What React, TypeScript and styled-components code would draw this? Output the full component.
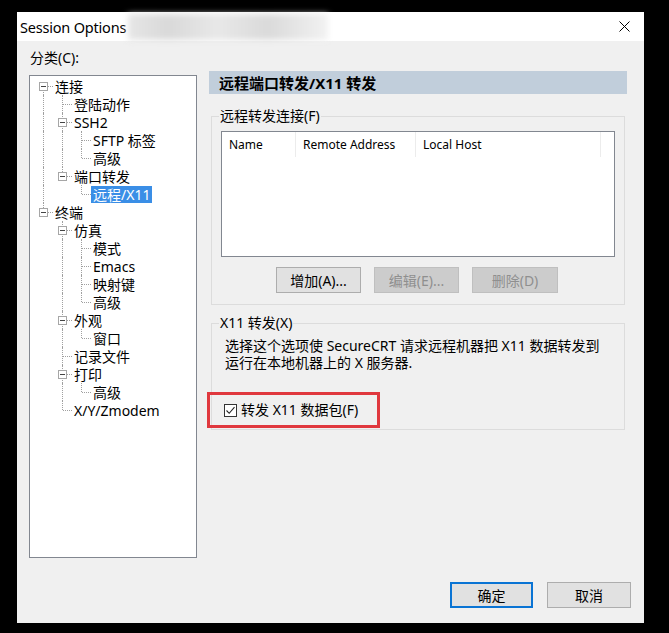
import React from "react";
import styled, { createGlobalStyle } from "styled-components";

const GlobalStyle = createGlobalStyle`
	html, body {
		margin: 0;
		padding: 0;
		background: #000;
	}
	body {
		font-family: "Noto Sans", "Noto Sans CJK SC", sans-serif;
		font-size: 14px;
		color: #000;
	}
`;

type TreeNode = { label: string; children?: TreeNode[]; selected?: boolean };

const tree: TreeNode[] = [
	{
		label: "连接",
		children: [
			{ label: "登陆动作" },
			{ label: "SSH2", children: [{ label: "SFTP 标签" }, { label: "高级" }] },
			{ label: "端口转发", children: [{ label: "远程/X11", selected: true }] },
		],
	},
	{
		label: "终端",
		children: [
			{
				label: "仿真",
				children: [
					{ label: "模式" },
					{ label: "Emacs" },
					{ label: "映射键" },
					{ label: "高级" },
				],
			},
			{ label: "外观", children: [{ label: "窗口" }] },
			{ label: "记录文件" },
			{ label: "打印", children: [{ label: "高级" }] },
			{ label: "X/Y/Zmodem" },
		],
	},
];

type FlatRow = {
	node: TreeNode;
	level: number;
	guides: boolean[];
	hasNext: boolean;
	isFirstRoot: boolean;
};

const flatten = (nodes: TreeNode[], level = 0, guides: boolean[] = []): FlatRow[] =>
	nodes.flatMap((node, i) => {
		const hasNext = i < nodes.length - 1;
		const row: FlatRow = {
			node,
			level,
			guides,
			hasNext,
			isFirstRoot: level === 0 && i === 0,
		};
		return [row, ...(node.children ? flatten(node.children, level + 1, [...guides, hasNext]) : [])];
	});

const Shell = styled.div`
	padding: 12px 0 0 17px;
`;

const Window = styled.div`
	width: 627px;
	height: 611px;
	background: #f0f0f0;
	display: flex;
	flex-direction: column;
	box-sizing: border-box;
`;

const TitleBar = styled.div`
	height: 29px;
	background: #fff;
	display: flex;
	align-items: center;
	padding-left: 3px;
	flex: none;
`;

const TitleText = styled.span`
	font-family: "Noto Sans", sans-serif;
	font-size: 14.5px;
	letter-spacing: -0.2px;
	color: #000;
`;

const Smudge = styled.span`
	width: 200px;
	height: 26px;
	margin-left: 2px;
	background: linear-gradient(90deg, #e6e6e6 0%, #d9d9d9 20%, #e8e8e8 45%, #dadada 70%, #f2f2f2 100%);
	filter: blur(3px);
`;

const CloseButton = styled.span`
	margin-left: auto;
	width: 46px;
	height: 29px;
	display: flex;
	align-items: center;
	justify-content: center;
	margin-right: -3px;
`;

const Body = styled.div`
	flex: 1;
	display: flex;
	flex-direction: column;
	padding: 0 13px 16px 12px;
`;

const Main = styled.div`
	display: flex;
	gap: 12px;
	height: 517px;
	margin-right: 4px;
`;

const LeftCol = styled.div`
	width: 168px;
	display: flex;
	flex-direction: column;
	padding-top: 8px;
`;

const CategoryLabel = styled.div`
	font-size: 14px;
	line-height: 18px;
	height: 18px;
	margin-bottom: 8px;
	padding-left: 1px;
`;

const TreeBox = styled.div`
	height: 483px;
	box-sizing: border-box;
	background: #fff;
	border: 1px solid #828790;
	padding: 1px 0 0 4px;
`;

const TreeRow = styled.div`
	display: flex;
	align-items: center;
	height: 18px;
`;

const Cell = styled.span<{ $up?: boolean; $down?: boolean; $across?: boolean }>`
	position: relative;
	flex: none;
	width: 19px;
	height: 18px;

	&::before {
		content: "";
		display: ${(p) => (p.$up || p.$down ? "block" : "none")};
		position: absolute;
		left: 9px;
		top: ${(p) => (p.$up ? 0 : 9)}px;
		bottom: ${(p) => (p.$down ? 0 : 9)}px;
		border-left: 1px dotted #a0a0a0;
	}

	&::after {
		content: "";
		display: ${(p) => (p.$across ? "block" : "none")};
		position: absolute;
		left: 10px;
		right: 0;
		top: 9px;
		border-top: 1px dotted #a0a0a0;
	}
`;

const Expander = styled.span`
	position: absolute;
	z-index: 1;
	left: 5px;
	top: 5px;
	width: 9px;
	height: 9px;
	box-sizing: border-box;
	border: 1px solid #a6a6a6;
	background: #fff;

	&::after {
		content: "";
		position: absolute;
		left: 1px;
		right: 1px;
		top: 3px;
		border-top: 1px solid #444;
	}
`;

const TreeLabel = styled.span<{ $selected?: boolean }>`
	padding: 0 2px;
	line-height: 17px;
	font-size: 14px;
	white-space: nowrap;
	background: ${(p) => (p.$selected ? "#3a8ee6" : "transparent")};
	color: ${(p) => (p.$selected ? "#fff" : "#000")};
`;

const RightCol = styled.div`
	flex: 1;
	display: flex;
	flex-direction: column;
	padding-top: 30px;
`;

const PageHeader = styled.div`
	height: 23px;
	background: #c1cedb;
	display: flex;
	align-items: center;
	padding-left: 10px;
	font-size: 15px;
	font-weight: 700;
	flex: none;
`;

const Group = styled.fieldset<{ $top: number; $bottom: number; $padTop?: number }>`
	margin: ${(p) => p.$top}px 2px 0;
	border: 1px solid #dcdcdc;
	padding: ${(p) => p.$padTop ?? 7}px 9px ${(p) => p.$bottom}px;
	min-width: 0;
`;

const GroupLegend = styled.legend`
	font-size: 14px;
	line-height: 16px;
	padding: 0 1px;
	margin-left: -2px;
`;

const ListView = styled.div`
	height: 126px;
	box-sizing: border-box;
	border: 1px solid #828790;
	background: #fff;
`;

const ListHeader = styled.div`
	display: flex;
	height: 25px;
	align-items: center;
	font-family: "Noto Sans", sans-serif;
	font-size: 12px;
`;

const Column = styled.div<{ $w: number }>`
	width: ${(p) => p.$w}px;
	height: 25px;
	line-height: 25px;
	padding-left: 7px;
	box-sizing: border-box;
	border-right: 1px solid #ececec;
	color: #000;
	white-space: nowrap;
`;

const ButtonRow = styled.div`
	display: flex;
	justify-content: center;
	gap: 13px;
	margin-top: 10px;
	padding-right: 2px;
`;

const Button = styled.button<{ $width?: number; $primary?: boolean }>`
	width: ${(p) => p.$width ?? 85}px;
	height: 26px;
	box-sizing: border-box;
	font-family: "Noto Sans", "Noto Sans CJK SC", sans-serif;
	font-size: 14px;
	color: #000;
	background: #e1e1e1;
	border: ${(p) => (p.$primary ? "2px solid #0a74d4" : "1px solid #adadad")};
	padding: 0;
	border-radius: 0;

	&:disabled {
		background: #cccccc;
		border-color: #bfbfbf;
		color: #8f8f8f;
	}
`;

const Description = styled.p`
	margin: 0;
	padding: 0 0 0 4px;
	font-size: 14px;
	line-height: 17px;
	white-space: nowrap;
`;

const DescLine = styled.span`
	display: block;
`;

const RedMark = styled.div`
	margin: 21px 0 0 -14px;
	width: 173px;
	height: 36px;
	box-sizing: border-box;
	border: 3px solid #e0383e;
	display: flex;
	align-items: center;
	padding-left: 14px;
	gap: 4px;
`;

const CheckBox = styled.span`
	width: 13px;
	height: 13px;
	box-sizing: border-box;
	border: 1px solid #333;
	background: #fff;
	display: flex;
	align-items: center;
	justify-content: center;
`;

const CheckLabel = styled.span`
	font-size: 14px;
	line-height: 16px;
	white-space: nowrap;
`;

const Footer = styled.div`
	margin-top: 24px;
	display: flex;
	justify-content: flex-end;
	gap: 14px;
`;

const rows = flatten(tree);

const Tree = () => (
	<TreeBox>
		{rows.map((r, i) => (
			<TreeRow key={i}>
				{r.guides.map((g, j) => (
					<Cell key={j} $up={g} $down={g} />
				))}
				<Cell $up={!r.isFirstRoot} $down={r.hasNext} $across>
					{r.node.children && <Expander />}
				</Cell>
				<TreeLabel $selected={r.node.selected}>{r.node.label}</TreeLabel>
			</TreeRow>
		))}
	</TreeBox>
);

const App = () => (
	<Shell>
		<GlobalStyle />
		<Window>
			<TitleBar>
				<TitleText>Session Options</TitleText>
				<Smudge />
				<CloseButton>
					<svg width="11" height="11" viewBox="0 0 11 11">
						<path d="M0.5 0.5 L10.5 10.5 M10.5 0.5 L0.5 10.5" stroke="#000" strokeWidth="1" fill="none" />
					</svg>
				</CloseButton>
			</TitleBar>
			<Body>
				<Main>
					<LeftCol>
						<CategoryLabel>分类(C):</CategoryLabel>
						<Tree />
					</LeftCol>
					<RightCol>
						<PageHeader>远程端口转发/X11 转发</PageHeader>
						<Group $top={14} $bottom={11}>
							<GroupLegend>远程转发连接(F)</GroupLegend>
							<ListView>
								<ListHeader>
									<Column $w={74}>Name</Column>
									<Column $w={120}>Remote Address</Column>
									<Column $w={185}>Local Host</Column>
								</ListHeader>
							</ListView>
							<ButtonRow>
								<Button>增加(A)...</Button>
								<Button disabled>编辑(E)...</Button>
								<Button disabled $width={86}>删除(D)</Button>
							</ButtonRow>
						</Group>
						<Group $top={10} $bottom={1} $padTop={6}>
							<GroupLegend>X11 转发(X)</GroupLegend>
							<Description>
								<DescLine>选择这个选项使 SecureCRT 请求远程机器把 X11 数据转发到</DescLine>
								<DescLine>运行在本地机器上的 X 服务器.</DescLine>
							</Description>
							<RedMark>
								<CheckBox>
									<svg width="11" height="11" viewBox="0 0 11 11">
										<path d="M1.5 5.5 L4.2 8.3 L9.5 2.2" stroke="#222" strokeWidth="1.1" fill="none" />
									</svg>
								</CheckBox>
								<CheckLabel>转发 X11 数据包(F)</CheckLabel>
							</RedMark>
						</Group>
					</RightCol>
				</Main>
				<Footer>
					<Button $primary $width={83}>确定</Button>
					<Button $width={84}>取消</Button>
				</Footer>
			</Body>
		</Window>
	</Shell>
);

export default App;
